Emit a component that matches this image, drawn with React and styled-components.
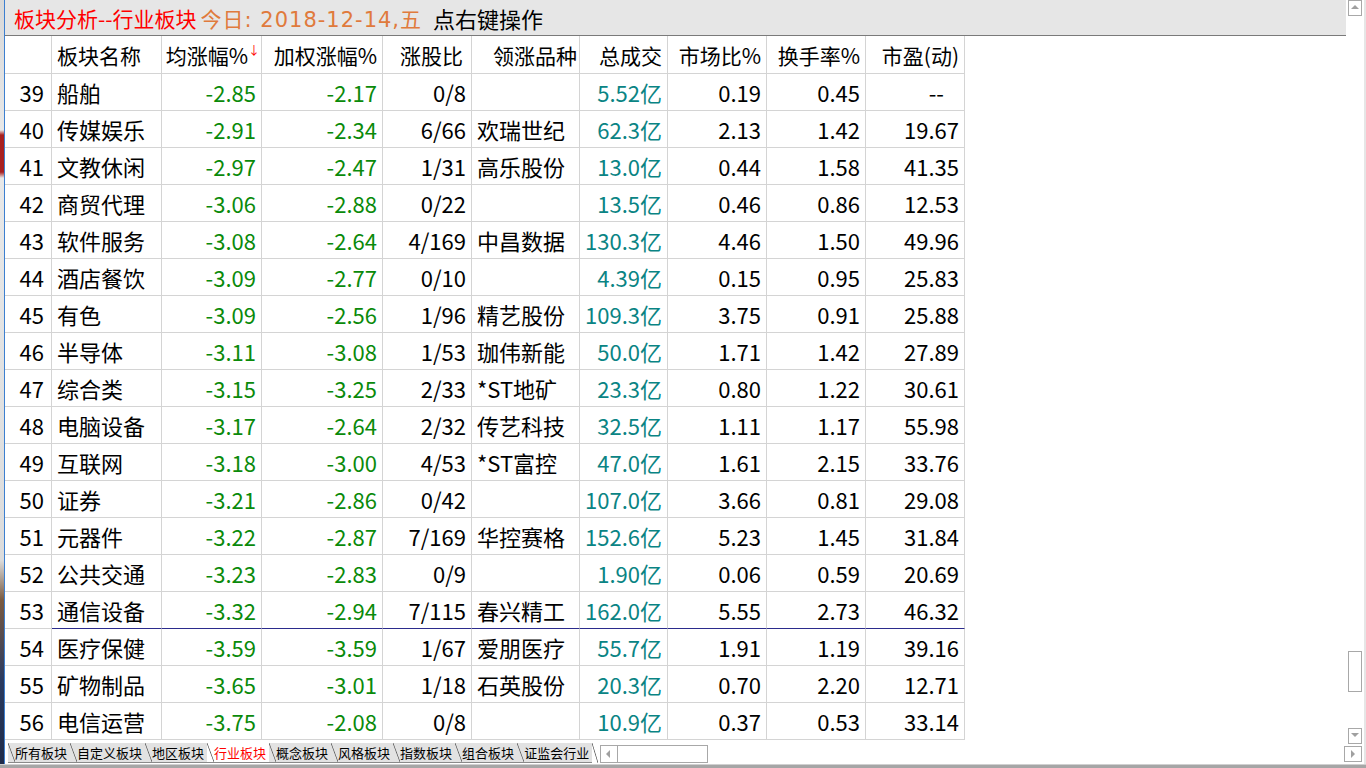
import React from "react";
import styled, { createGlobalStyle } from "styled-components";

const GlobalStyle = createGlobalStyle`
  html, body {
    margin: 0;
    padding: 0;
    overflow: hidden;
    background: #ffffff;
  }
  body {
    font-family: "Noto Sans CJK SC", "Noto Sans", sans-serif;
  }
`;

const Page = styled.div`
  width: 1366px;
  height: 768px;
  display: flex;
  flex-direction: column;
  background: #ffffff;
`;

const Body = styled.div`
  flex: 1;
  display: flex;
  min-height: 0;
`;

const DesktopEdge = styled.div`
  width: 4px;
  border-right: 1px solid #3c7fd0;
  background: linear-gradient(
    to bottom,
    #d8d8d8 0px,
    #e8e8e8 130px,
    #a82020 135px,
    #a82020 172px,
    #e8e8e8 178px,
    #dcdcdc 560px,
    #7a5a40 600px,
    #2a3a60 680px,
    #1e2a48 768px
  );
`;

const Main = styled.div`
  flex: 1;
  display: flex;
  flex-direction: column;
  min-width: 0;
`;

const TitleBar = styled.div`
  height: 35px;
  background: #e6e6e6;
  border-bottom: 1px solid #7a7a7a;
  display: flex;
  align-items: center;
  padding-left: 9px;
  font-size: 21px;
  white-space: nowrap;
`;

const TitleText = styled.span`
  color: ${(p) => p.color};
  margin-right: ${(p) => p.gap || 0}px;
  font-size: ${(p) => p.size || 21}px;
  font-family: ${(p) =>
    p.wide
      ? `"DejaVu Sans", "Noto Sans CJK SC", sans-serif`
      : `"Noto Sans CJK SC", "Noto Sans", sans-serif`};
  letter-spacing: ${(p) => (p.wide ? "1px" : "0")};
`;

const Table = styled.div`
  display: grid;
  grid-template-columns: 47px 110px 100px 121px 89px 108px 88px 99px 99px 99px;
  width: 960px;
`;

const Cell = styled.div`
  box-sizing: border-box;
  height: ${(p) => (p.head ? 38 : 37)}px;
  border-right: 1px solid #d4d4d4;
  border-bottom: 1px solid ${(p) => (p.dark ? "#2b2b8c" : "#d4d4d4")};
  display: flex;
  align-items: center;
  justify-content: ${(p) => (p.left ? "flex-start" : "flex-end")};
  padding: 0 ${(p) => (p.pr != null ? p.pr : 5)}px 0 ${(p) => (p.pl != null ? p.pl : 5)}px;
  font-size: ${(p) => (p.head ? 21 : 22)}px;
  color: ${(p) => p.color || "#000000"};
  white-space: nowrap;
  overflow: hidden;
`;

const SortArrow = styled.span`
  color: #ff0000;
  font-size: 12px;
  margin-top: -10px;
  margin-right: -1px;
`;

const Filler = styled.div`
  flex: 1;
`;

const TabBar = styled.div`
  height: 20px;
  display: flex;
  align-items: stretch;
  padding-left: 3px;
  margin-bottom: 1px;
`;

const Tab = styled.div`
  position: relative;
  display: flex;
  align-items: center;
  padding: 0 3px 0 7px;
  font-size: 13px;
  color: ${(p) => (p.active ? "#ff0000" : "#000000")};
  background: ${(p) => (p.active ? "#ffffff" : "#e2e2e2")};
  border-bottom: 1px solid #8a8a8a;
  &::before {
    content: "";
    position: absolute;
    left: 0;
    top: 0;
    bottom: 0;
    width: 7px;
    background: linear-gradient(
      ${(p) => (p.after ? "to bottom left" : "to top right")},
      transparent calc(50% - 0.8px),
      #6a6a6a 50%,
      transparent calc(50% + 0.8px)
    );
  }
`;

const TabEnd = styled.div`
  width: 6px;
  background: linear-gradient(
    to bottom left,
    transparent calc(50% - 0.8px),
    #6a6a6a 50%,
    transparent calc(50% + 0.8px)
  );
`;

const HScroll = styled.div`
  width: 106px;
  height: 16px;
  margin: 2px 0 0 2px;
  border: 1px solid #a8a8a8;
  display: flex;
`;

const ScrollBtn = styled.div`
  box-sizing: border-box;
  width: ${(p) => p.w || 15}px;
  height: ${(p) => p.h || 15}px;
  margin-left: ${(p) => p.ml || 0}px;
  border: 1px solid #a8a8a8;
  display: flex;
  align-items: center;
  justify-content: center;
  background: #ffffff;
`;

const HArrowBtn = styled.div`
  width: 16px;
  border-right: 1px solid #a8a8a8;
  display: flex;
  align-items: center;
  justify-content: center;
`;

const VScroll = styled.div`
  width: 16px;
  padding-left: 2px;
  border-right: 2px solid #e6e6e6;
  display: flex;
  flex-direction: column;
  align-items: flex-start;
`;

const VTrack = styled.div`
  flex: 1;
  display: flex;
  flex-direction: column;
  padding: 1px 0 0 0;
`;

const Gap = styled.div`
  height: ${(p) => p.h}px;
`;

const BottomEdge = styled.div`
  height: 3px;
  border-top: 1px solid #d0d0d0;
  background: #a6a6a6;
`;

const Tri = ({ dir }) => {
  const pts = {
    up: "1,6 5,2 9,6",
    down: "1,2 5,6 9,2",
    left: "6,1 2,5 6,9",
    right: "3,1 7,5 3,9",
  }[dir];
  return (
    <svg width="10" height="10" viewBox="0 0 10 10">
      <polygon points={pts} fill="#a0a0a0" />
    </svg>
  );
};

const GREEN = "#0a8a0a";
const TEAL = "#0a8484";

const rows = [
  ["39", "船舶", "-2.85", "-2.17", "0/8", "", "5.52亿", "0.19", "0.45", "--"],
  ["40", "传媒娱乐", "-2.91", "-2.34", "6/66", "欢瑞世纪", "62.3亿", "2.13", "1.42", "19.67"],
  ["41", "文教休闲", "-2.97", "-2.47", "1/31", "高乐股份", "13.0亿", "0.44", "1.58", "41.35"],
  ["42", "商贸代理", "-3.06", "-2.88", "0/22", "", "13.5亿", "0.46", "0.86", "12.53"],
  ["43", "软件服务", "-3.08", "-2.64", "4/169", "中昌数据", "130.3亿", "4.46", "1.50", "49.96"],
  ["44", "酒店餐饮", "-3.09", "-2.77", "0/10", "", "4.39亿", "0.15", "0.95", "25.83"],
  ["45", "有色", "-3.09", "-2.56", "1/96", "精艺股份", "109.3亿", "3.75", "0.91", "25.88"],
  ["46", "半导体", "-3.11", "-3.08", "1/53", "珈伟新能", "50.0亿", "1.71", "1.42", "27.89"],
  ["47", "综合类", "-3.15", "-3.25", "2/33", "*ST地矿", "23.3亿", "0.80", "1.22", "30.61"],
  ["48", "电脑设备", "-3.17", "-2.64", "2/32", "传艺科技", "32.5亿", "1.11", "1.17", "55.98"],
  ["49", "互联网", "-3.18", "-3.00", "4/53", "*ST富控", "47.0亿", "1.61", "2.15", "33.76"],
  ["50", "证券", "-3.21", "-2.86", "0/42", "", "107.0亿", "3.66", "0.81", "29.08"],
  ["51", "元器件", "-3.22", "-2.87", "7/169", "华控赛格", "152.6亿", "5.23", "1.45", "31.84"],
  ["52", "公共交通", "-3.23", "-2.83", "0/9", "", "1.90亿", "0.06", "0.59", "20.69"],
  ["53", "通信设备", "-3.32", "-2.94", "7/115", "春兴精工", "162.0亿", "5.55", "2.73", "46.32"],
  ["54", "医疗保健", "-3.59", "-3.59", "1/67", "爱朋医疗", "55.7亿", "1.91", "1.19", "39.16"],
  ["55", "矿物制品", "-3.65", "-3.01", "1/18", "石英股份", "20.3亿", "0.70", "2.20", "12.71"],
  ["56", "电信运营", "-3.75", "-2.08", "0/8", "", "10.9亿", "0.37", "0.53", "33.14"],
];

const colColor = [null, null, GREEN, GREEN, null, null, TEAL, null, null, null];

const tabs = ["所有板块", "自定义板块", "地区板块", "行业板块", "概念板块", "风格板块", "指数板块", "组合板块", "证监会行业"];

const App = () => {
  return (
    <>
      <GlobalStyle />
      <Page>
        <Body>
          <DesktopEdge />
          <Main>
            <TitleBar>
              <TitleText color="#ff0000" gap={4}>板块分析--行业板块</TitleText>
              <TitleText color="#e07a3c" gap={11} wide>今日: 2018-12-14,五</TitleText>
              <TitleText color="#000000" size={22}>点右键操作</TitleText>
            </TitleBar>
            <Table>
              <Cell head />
              <Cell head left>板块名称</Cell>
              <Cell head pr={2} pl={0}>
                均涨幅%<SortArrow>↓</SortArrow>
              </Cell>
              <Cell head>加权涨幅%</Cell>
              <Cell head pr={8}>涨股比</Cell>
              <Cell head pr={2}>领涨品种</Cell>
              <Cell head>总成交</Cell>
              <Cell head>市场比%</Cell>
              <Cell head>换手率%</Cell>
              <Cell head>市盈(动)</Cell>
              {rows.map((r) =>
                r.map((v, i) => (
                  <Cell
                    key={r[0] + "-" + i}
                    left={i === 1 || i === 5}
                    color={colColor[i]}
                    dark={r[0] === "53" && i > 0}
                    pr={i === 0 ? 7 : i === 9 && v === "--" ? 20 : 5}
                  >
                    {v}
                  </Cell>
                ))
              )}
            </Table>
            <Filler />
            <TabBar>
              {tabs.map((t, i) => (
                <Tab key={t} active={t === "行业板块"} after={i > 3}>
                  {t}
                </Tab>
              ))}
              <TabEnd />
              <HScroll>
                <HArrowBtn>
                  <Tri dir="left" />
                </HArrowBtn>
              </HScroll>
            </TabBar>
          </Main>
          <VScroll>
            <ScrollBtn w={14} h={16}>
              <Tri dir="up" />
            </ScrollBtn>
            <VTrack>
              <Gap h={634} />
              <ScrollBtn w={14} h={41} />
              <Gap h={36} />
              <ScrollBtn w={14} h={16}>
                <Tri dir="down" />
              </ScrollBtn>
              <Gap h={2} />
              <ScrollBtn w={18} h={16} ml={-4}>
                <Tri dir="right" />
              </ScrollBtn>
            </VTrack>
          </VScroll>
        </Body>
        <BottomEdge />
      </Page>
    </>
  );
};

export default App;
